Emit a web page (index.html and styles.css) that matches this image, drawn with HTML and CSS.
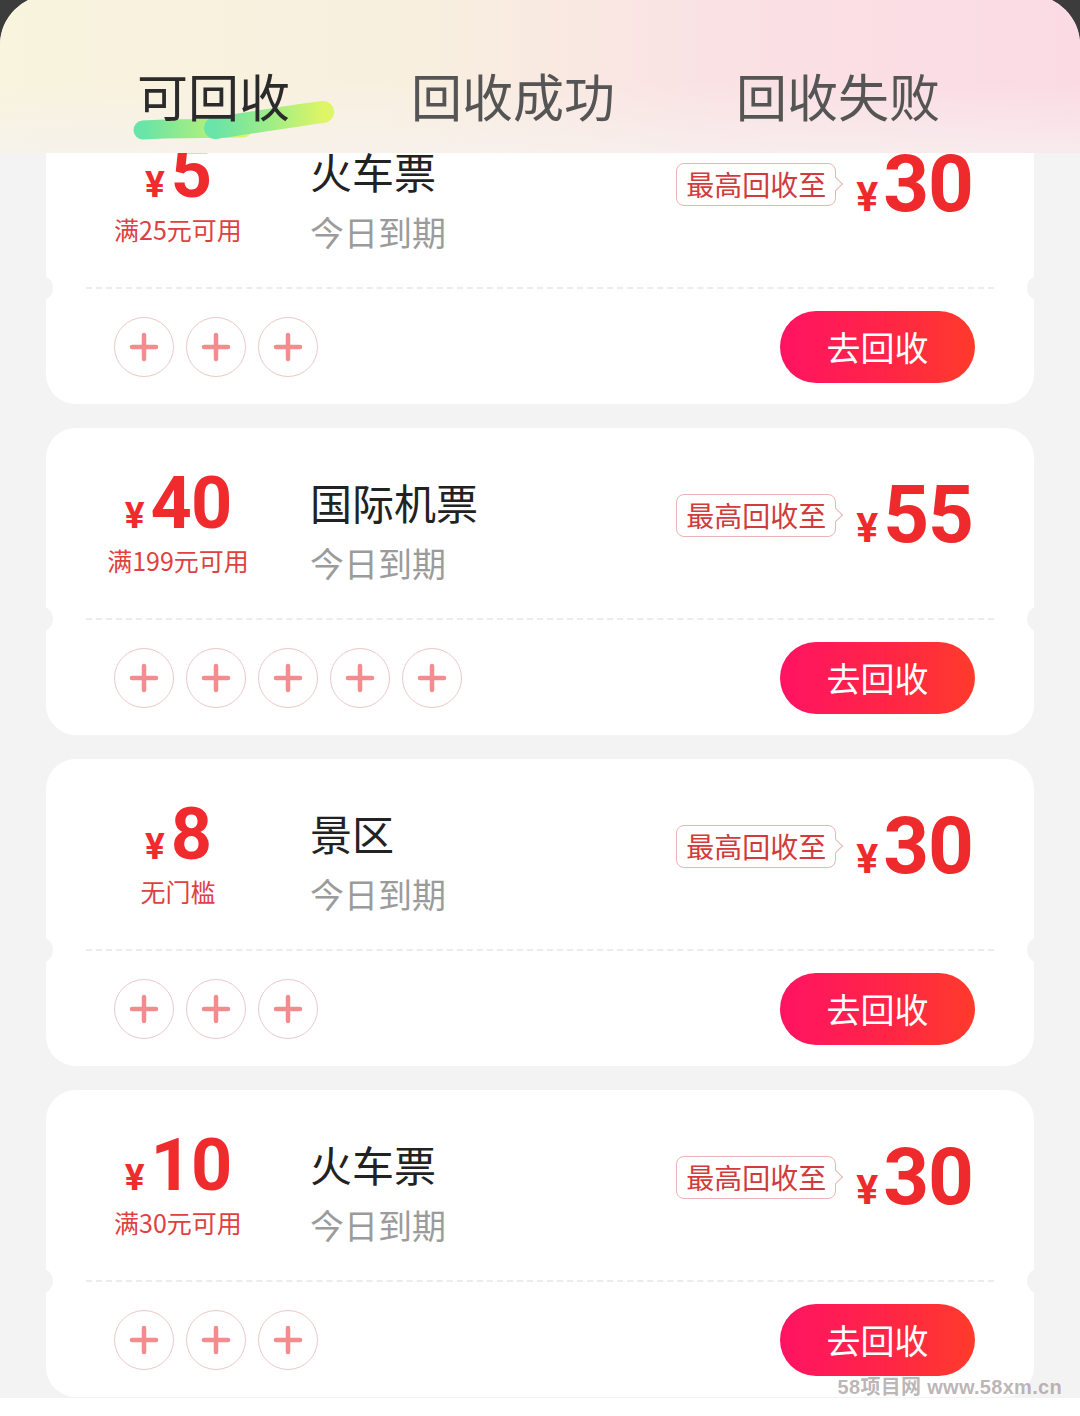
FILE: index.html
```html
<!DOCTYPE html>
<html lang="zh-CN">
<head>
<meta charset="utf-8">
<title>可回收</title>
<link rel="stylesheet" href="styles.css">
</head>
<body>
<div class="sheet">
  <header class="tabs">
    <div class="tab active">
      <svg class="brush" width="206" height="44" viewBox="0 0 206 44">
        <defs>
          <linearGradient id="bg1" x1="0" y1="0" x2="1" y2="0">
            <stop offset="0" stop-color="#5ee3a3"/>
            <stop offset="0.55" stop-color="#9cee7c"/>
            <stop offset="1" stop-color="#dcf65c"/>
          </linearGradient>
        </defs>
        <path d="M12 31 C 40 29, 80 30, 112 29" stroke="url(#bg1)" stroke-width="19" stroke-linecap="round" fill="none"/>
        <path d="M84 29 C 120 24, 160 17, 192 13" stroke="url(#bg1)" stroke-width="22" stroke-linecap="round" fill="none"/>
      </svg>
      <span class="tab-label">可回收</span>
    </div>
    <div class="tab">回收成功</div>
    <div class="tab">回收失败</div>
  </header>

  <main class="list">
    <div class="list-inner">
      <section class="card">
        <div class="card-top">
          <div class="amount-col">
            <div class="amount"><span class="yen-s">¥</span><span class="num-s">5</span></div>
            <div class="cond">满25元可用</div>
          </div>
          <div class="info-col">
            <div class="title">火车票</div>
            <div class="expire">今日到期</div>
          </div>
          <div class="recycle">
            <span class="badge">最高回收至</span>
            <span class="price"><span class="yen-l">¥</span><span class="num-l">30</span></span>
          </div>
        </div>
        <div class="divider"></div>
        <div class="card-bottom">
          <div class="slots">
            <span class="slot"><svg width="30" height="30" viewBox="0 0 30 30"><path d="M15 3v24M3 15h24"/></svg></span>
            <span class="slot"><svg width="30" height="30" viewBox="0 0 30 30"><path d="M15 3v24M3 15h24"/></svg></span>
            <span class="slot"><svg width="30" height="30" viewBox="0 0 30 30"><path d="M15 3v24M3 15h24"/></svg></span>
          </div>
          <button class="go">去回收</button>
        </div>
      </section>

      <section class="card">
        <div class="card-top">
          <div class="amount-col">
            <div class="amount"><span class="yen-s">¥</span><span class="num-s">40</span></div>
            <div class="cond">满199元可用</div>
          </div>
          <div class="info-col">
            <div class="title">国际机票</div>
            <div class="expire">今日到期</div>
          </div>
          <div class="recycle">
            <span class="badge">最高回收至</span>
            <span class="price"><span class="yen-l">¥</span><span class="num-l">55</span></span>
          </div>
        </div>
        <div class="divider"></div>
        <div class="card-bottom">
          <div class="slots">
            <span class="slot"><svg width="30" height="30" viewBox="0 0 30 30"><path d="M15 3v24M3 15h24"/></svg></span>
            <span class="slot"><svg width="30" height="30" viewBox="0 0 30 30"><path d="M15 3v24M3 15h24"/></svg></span>
            <span class="slot"><svg width="30" height="30" viewBox="0 0 30 30"><path d="M15 3v24M3 15h24"/></svg></span>
            <span class="slot"><svg width="30" height="30" viewBox="0 0 30 30"><path d="M15 3v24M3 15h24"/></svg></span>
            <span class="slot"><svg width="30" height="30" viewBox="0 0 30 30"><path d="M15 3v24M3 15h24"/></svg></span>
          </div>
          <button class="go">去回收</button>
        </div>
      </section>

      <section class="card">
        <div class="card-top">
          <div class="amount-col">
            <div class="amount"><span class="yen-s">¥</span><span class="num-s">8</span></div>
            <div class="cond">无门槛</div>
          </div>
          <div class="info-col">
            <div class="title">景区</div>
            <div class="expire">今日到期</div>
          </div>
          <div class="recycle">
            <span class="badge">最高回收至</span>
            <span class="price"><span class="yen-l">¥</span><span class="num-l">30</span></span>
          </div>
        </div>
        <div class="divider"></div>
        <div class="card-bottom">
          <div class="slots">
            <span class="slot"><svg width="30" height="30" viewBox="0 0 30 30"><path d="M15 3v24M3 15h24"/></svg></span>
            <span class="slot"><svg width="30" height="30" viewBox="0 0 30 30"><path d="M15 3v24M3 15h24"/></svg></span>
            <span class="slot"><svg width="30" height="30" viewBox="0 0 30 30"><path d="M15 3v24M3 15h24"/></svg></span>
          </div>
          <button class="go">去回收</button>
        </div>
      </section>

      <section class="card">
        <div class="card-top">
          <div class="amount-col">
            <div class="amount"><span class="yen-s">¥</span><span class="num-s">10</span></div>
            <div class="cond">满30元可用</div>
          </div>
          <div class="info-col">
            <div class="title">火车票</div>
            <div class="expire">今日到期</div>
          </div>
          <div class="recycle">
            <span class="badge">最高回收至</span>
            <span class="price"><span class="yen-l">¥</span><span class="num-l">30</span></span>
          </div>
        </div>
        <div class="divider"></div>
        <div class="card-bottom">
          <div class="slots">
            <span class="slot"><svg width="30" height="30" viewBox="0 0 30 30"><path d="M15 3v24M3 15h24"/></svg></span>
            <span class="slot"><svg width="30" height="30" viewBox="0 0 30 30"><path d="M15 3v24M3 15h24"/></svg></span>
            <span class="slot"><svg width="30" height="30" viewBox="0 0 30 30"><path d="M15 3v24M3 15h24"/></svg></span>
          </div>
          <button class="go">去回收</button>
        </div>
      </section>
    </div>
  </main>

  <footer class="bottom-bar"></footer>
  <div class="watermark">58项目网 www.58xm.cn</div>
</div>
</body>
</html>
```

FILE: styles.css
```css
* { box-sizing: border-box; }

html, body {
  margin: 0;
  padding: 0;
}

body {
  width: 1080px;
  height: 1416px;
  overflow: hidden;
  background: #3c3c3c;
  font-family: "Noto Sans CJK SC", "Noto Sans", sans-serif;
}

.sheet {
  position: relative;
  margin-top: -5px;
  height: 1421px;
  display: flex;
  flex-direction: column;
  border-radius: 50px 50px 0 0;
  overflow: hidden;
  background: #f3f3f3;
}

/* ---------- tabs ---------- */
.tabs {
  height: 158px;
  flex: none;
  display: flex;
  align-items: flex-start;
  gap: 121px;
  padding: 70px 0 0 137px;
  background:
    linear-gradient(180deg, rgba(255,255,255,0) 55%, rgba(247,242,240,0.7) 100%),
    linear-gradient(90deg, #f8f4dd 0%, #f8efdf 40%, #fae2e4 65%, #fbdae4 100%);
}

.tab {
  position: relative;
  font-size: 51px;
  line-height: 60px;
  color: #555;
  white-space: nowrap;
}

.tab.active { color: #2b2b2b; }

.tab-label {
  position: relative;
  z-index: 1;
}

.brush {
  position: absolute;
  left: -6px;
  top: 34px;
  opacity: 0.92;
}

/* ---------- list ---------- */
.list {
  flex: 1;
  overflow: hidden;
  background: #f3f3f3;
}

.list-inner {
  margin-top: -56px;
  padding: 0 46px;
  display: flex;
  flex-direction: column;
  gap: 24px;
}

.card {
  height: 307px;
  background: #fff;
  border-radius: 30px;
  display: flex;
  flex-direction: column;
}

.card-top {
  height: 190px;
  flex: none;
  display: flex;
  padding: 36px 61px 0 0;
}

.amount-col {
  width: 264px;
  flex: none;
  display: flex;
  flex-direction: column;
  align-items: center;
}

.amount {
  display: flex;
  align-items: baseline;
  color: #ef2b2e;
  font-family: Roboto, "Liberation Sans", sans-serif;
  font-weight: 700;
  line-height: 80px;
  height: 80px;
}

.yen-s {
  font-size: 37px;
  margin-right: 6px;
}

.num-s {
  font-size: 72px;
  letter-spacing: -1px;
}

.cond {
  font-size: 25px;
  line-height: 32px;
  color: #e0403f;
  white-space: nowrap;
}

.info-col {
  display: flex;
  flex-direction: column;
  padding-top: 13px;
}

.title {
  font-size: 42px;
  line-height: 50px;
  color: #222;
}

.expire {
  margin-top: 14px;
  font-size: 34px;
  line-height: 44px;
  color: #9b9b9b;
}

.recycle {
  margin-left: auto;
  display: flex;
  align-items: center;
  margin-top: 7px;
  height: 88px;
}

.badge {
  position: relative;
  height: 43px;
  padding: 0 9px;
  margin-right: 20px;
  border: 1.5px solid #eab4b4;
  border-radius: 8px;
  background: #fff;
  font-size: 28px;
  line-height: 40px;
  color: #d13b3b;
  white-space: nowrap;
}

.badge::after {
  content: "";
  position: absolute;
  right: -6px;
  top: 50%;
  width: 9px;
  height: 9px;
  margin-top: -5px;
  background: #fff;
  border-top: 1.5px solid #eab4b4;
  border-right: 1.5px solid #eab4b4;
  transform: rotate(45deg);
}

.price {
  display: flex;
  align-items: baseline;
  padding-top: 13px;
  color: #ef2a2c;
  font-family: Roboto, "Liberation Sans", sans-serif;
  font-weight: 700;
  line-height: 88px;
}

.yen-l {
  font-size: 41px;
  margin-right: 5px;
}

.num-l {
  font-size: 80px;
  letter-spacing: -1px;
}

/* divider with notches */
.divider {
  position: relative;
  height: 0;
  margin: 0 40px;
  border-top: 2px dashed #ececec;
}

.divider::before,
.divider::after {
  content: "";
  position: absolute;
  top: -14px;
  width: 26px;
  height: 26px;
  border-radius: 50%;
  background: #f3f3f3;
}

.divider::before { left: -59px; }
.divider::after { right: -59px; }

.card-bottom {
  flex: 1;
  display: flex;
  align-items: center;
  justify-content: space-between;
  padding: 0 59px 0 68px;
}

.slots {
  display: flex;
  gap: 12px;
}

.slot {
  width: 60px;
  height: 60px;
  border-radius: 50%;
  border: 1.5px solid #ebc9c9;
  display: flex;
  align-items: center;
  justify-content: center;
}

.slot svg path {
  stroke: #f38b8f;
  stroke-width: 4.5;
  stroke-linecap: round;
  fill: none;
}

.go {
  width: 195px;
  height: 72px;
  border: none;
  border-radius: 36px;
  background: linear-gradient(90deg, #ff1362 0%, #ff2546 55%, #ff3b2b 100%);
  color: #fff;
  font-family: "Noto Sans CJK SC", sans-serif;
  font-size: 34px;
  line-height: 72px;
  padding: 0;
}

.bottom-bar {
  height: 18px;
  flex: none;
  background: #fff;
}

.watermark {
  position: absolute;
  right: 18px;
  bottom: 16px;
  font-family: "Liberation Sans", "Noto Sans CJK SC", sans-serif;
  font-weight: 700;
  font-size: 20px;
  color: rgba(160, 148, 150, 0.7);
  letter-spacing: 0.3px;
  white-space: nowrap;
}
```
